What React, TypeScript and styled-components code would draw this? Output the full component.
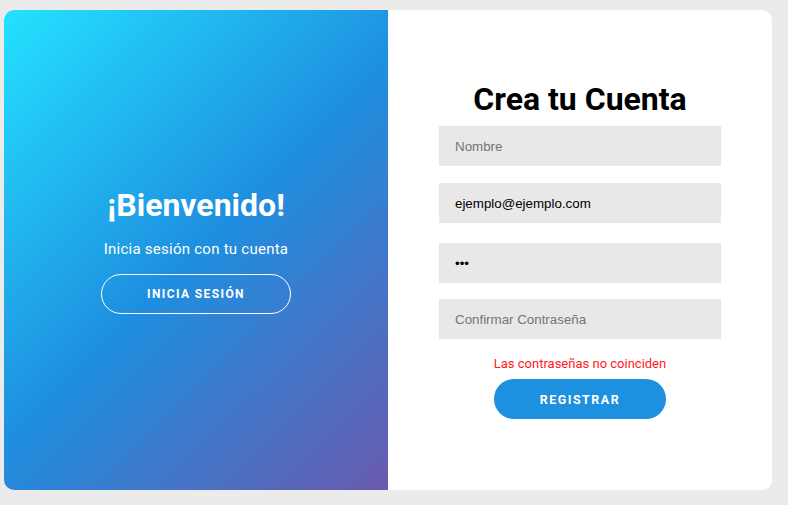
import React from "react";
import styled, { createGlobalStyle } from "styled-components";

const GlobalStyle = createGlobalStyle`
  html, body {
    margin: 0;
    padding: 0;
    background: #ebebeb;
  }
  * {
    box-sizing: border-box;
  }
`;

const App = () => {
  return (
    <Page>
      <GlobalStyle />
      <Card>
        <WelcomePanel>
          <WelcomeTitle>¡Bienvenido!</WelcomeTitle>
          <WelcomeText>Inicia sesión con tu cuenta</WelcomeText>
          <GhostButton>INICIA SESIÓN</GhostButton>
        </WelcomePanel>
        <FormPanel>
          <FormTitle>Crea tu Cuenta</FormTitle>
          <Field $top={0} placeholder="Nombre" />
          <Field $top={17} defaultValue="ejemplo@ejemplo.com" />
          <Field $top={20} type="password" defaultValue="123" />
          <Field $top={16} type="password" placeholder="Confirmar Contraseña" />
          <ErrorText>Las contraseñas no coinciden</ErrorText>
          <SubmitButton>REGISTRAR</SubmitButton>
        </FormPanel>
      </Card>
    </Page>
  );
};

const Page = styled.div`
  width: 100%;
  min-height: 505px;
  padding: 10px 16px 15px 4px;
`;

const Card = styled.div`
  width: 768px;
  height: 480px;
  display: grid;
  grid-template-columns: 384px 384px;
  border-radius: 10px;
  overflow: hidden;
  background: #ffffff;
`;

const WelcomePanel = styled.div`
  display: flex;
  flex-direction: column;
  align-items: center;
  padding-top: 175px;
  color: #ffffff;
  font-family: Roboto, "Liberation Sans", sans-serif;
  background: linear-gradient(
    135deg,
    #24e2ff 0%,
    #1e8fe0 50%,
    #6a5aae 100%
  );
`;

const WelcomeTitle = styled.h1`
  margin: 0;
  font-size: 32px;
  font-weight: 700;
  line-height: 40px;
`;

const WelcomeText = styled.p`
  margin: 15px 0 0;
  font-size: 15px;
  letter-spacing: 0.25px;
  line-height: 18px;
`;

const GhostButton = styled.button`
  margin-top: 16px;
  width: 190px;
  height: 40px;
  border: 1px solid #ffffff;
  border-radius: 20px;
  background: transparent;
  color: #ffffff;
  font-family: Roboto, "Liberation Sans", sans-serif;
  font-size: 12px;
  font-weight: 700;
  letter-spacing: 1.4px;
  cursor: pointer;
`;

const FormPanel = styled.div`
  display: flex;
  flex-direction: column;
  align-items: center;
  padding-top: 71px;
  font-family: Roboto, "Liberation Sans", sans-serif;
`;

const FormTitle = styled.h2`
  margin: 0 0 8px;
  font-size: 32px;
  font-weight: 700;
  line-height: 37px;
  color: #000000;
`;

const Field = styled.input<{ $top: number }>`
  margin-top: ${(p) => p.$top}px;
  width: 282px;
  height: 40px;
  border: none;
  outline: none;
  padding: 0 16px;
  background: #e8e8e8;
  font-family: "Liberation Sans", Arial, sans-serif;
  font-size: 13.333px;
  color: #000000;
  &::placeholder {
    color: #757575;
  }
`;

const ErrorText = styled.p`
  margin: 17px 0 0;
  font-size: 13px;
  line-height: 15px;
  color: #ff1a1a;
`;

const SubmitButton = styled.button`
  margin-top: 8px;
  width: 172px;
  height: 40px;
  border: none;
  border-radius: 20px;
  background: #1e90e0;
  color: #ffffff;
  font-family: Roboto, "Liberation Sans", sans-serif;
  font-size: 12.5px;
  font-weight: 700;
  letter-spacing: 1.5px;
  cursor: pointer;
`;

export default App;
